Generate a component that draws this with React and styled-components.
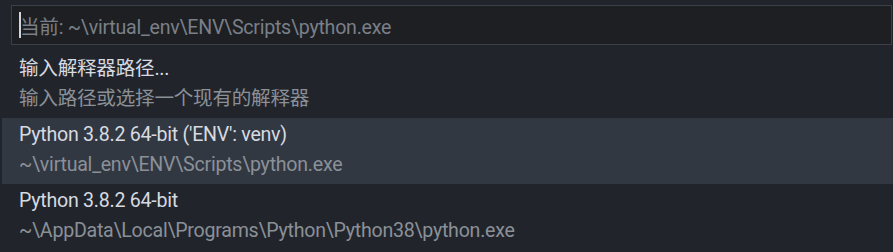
import styled, { createGlobalStyle } from "styled-components";

const GlobalStyle = createGlobalStyle`
    html, body {
        margin: 0;
        padding: 0;
        background: #21252b;
    }
    body {
        font-family: Roboto, "Noto Sans CJK SC", sans-serif;
        letter-spacing: -0.25px;
    }
`

const items = [
    { label: "输入解释器路径...", detail: "输入路径或选择一个现有的解释器" },
    { label: "Python 3.8.2 64-bit ('ENV': venv)", detail: "~\\virtual_env\\ENV\\Scripts\\python.exe", active: true },
    { label: "Python 3.8.2 64-bit", detail: "~\\AppData\\Local\\Programs\\Python\\Python38\\python.exe" },
];

function App() {
    return (
        <>
            <GlobalStyle />
            <QuickPick>
                <InputBox>
                    <Caret />
                    <Placeholder>当前: ~\virtual_env\ENV\Scripts\python.exe</Placeholder>
                </InputBox>
                <List>
                    {items.map((item) => (
                        <Row key={item.detail} active={item.active}>
                            <Label>{item.label}</Label>
                            <Detail>{item.detail}</Detail>
                        </Row>
                    ))}
                </List>
            </QuickPick>
        </>
    );
}

const QuickPick = styled.div`
    width: 893px;
    height: 252px;
    background-color: #21252b;
    padding-top: 5px;
    box-sizing: border-box;
    overflow: hidden;

    display: flex;
    flex-direction: column;
`

const InputBox = styled.div`
    height: 40px;
    margin: 0 1px 0 11px;
    padding: 0 7px;
    box-sizing: border-box;
    background-color: #1d1f23;
    border: 1px solid #3b4048;

    display: flex;
    align-items: center;
`

const Caret = styled.span`
    width: 2px;
    height: 26px;
    background-color: #d4d4d4;
    margin-right: -1px;
`

const Placeholder = styled.span`
    color: #7a7f88;
    font-size: 19.6px;
    white-space: nowrap;
`

const List = styled.div`
    margin-top: 7px;
    padding-left: 2px;

    display: flex;
    flex-direction: column;
`

const Row = styled.div`
    height: 66px;
    padding: 2px 17px 0;
    box-sizing: border-box;
    background-color: ${(p) => (p.active ? "#323842" : "transparent")};

    display: flex;
    flex-direction: column;
`

const Label = styled.div`
    color: #d7dae0;
    font-size: 19.6px;
    line-height: 30px;
    white-space: nowrap;
`

const Detail = styled.div`
    color: #8b9098;
    font-size: 19.6px;
    line-height: 30px;
    white-space: nowrap;
`

export default App;
